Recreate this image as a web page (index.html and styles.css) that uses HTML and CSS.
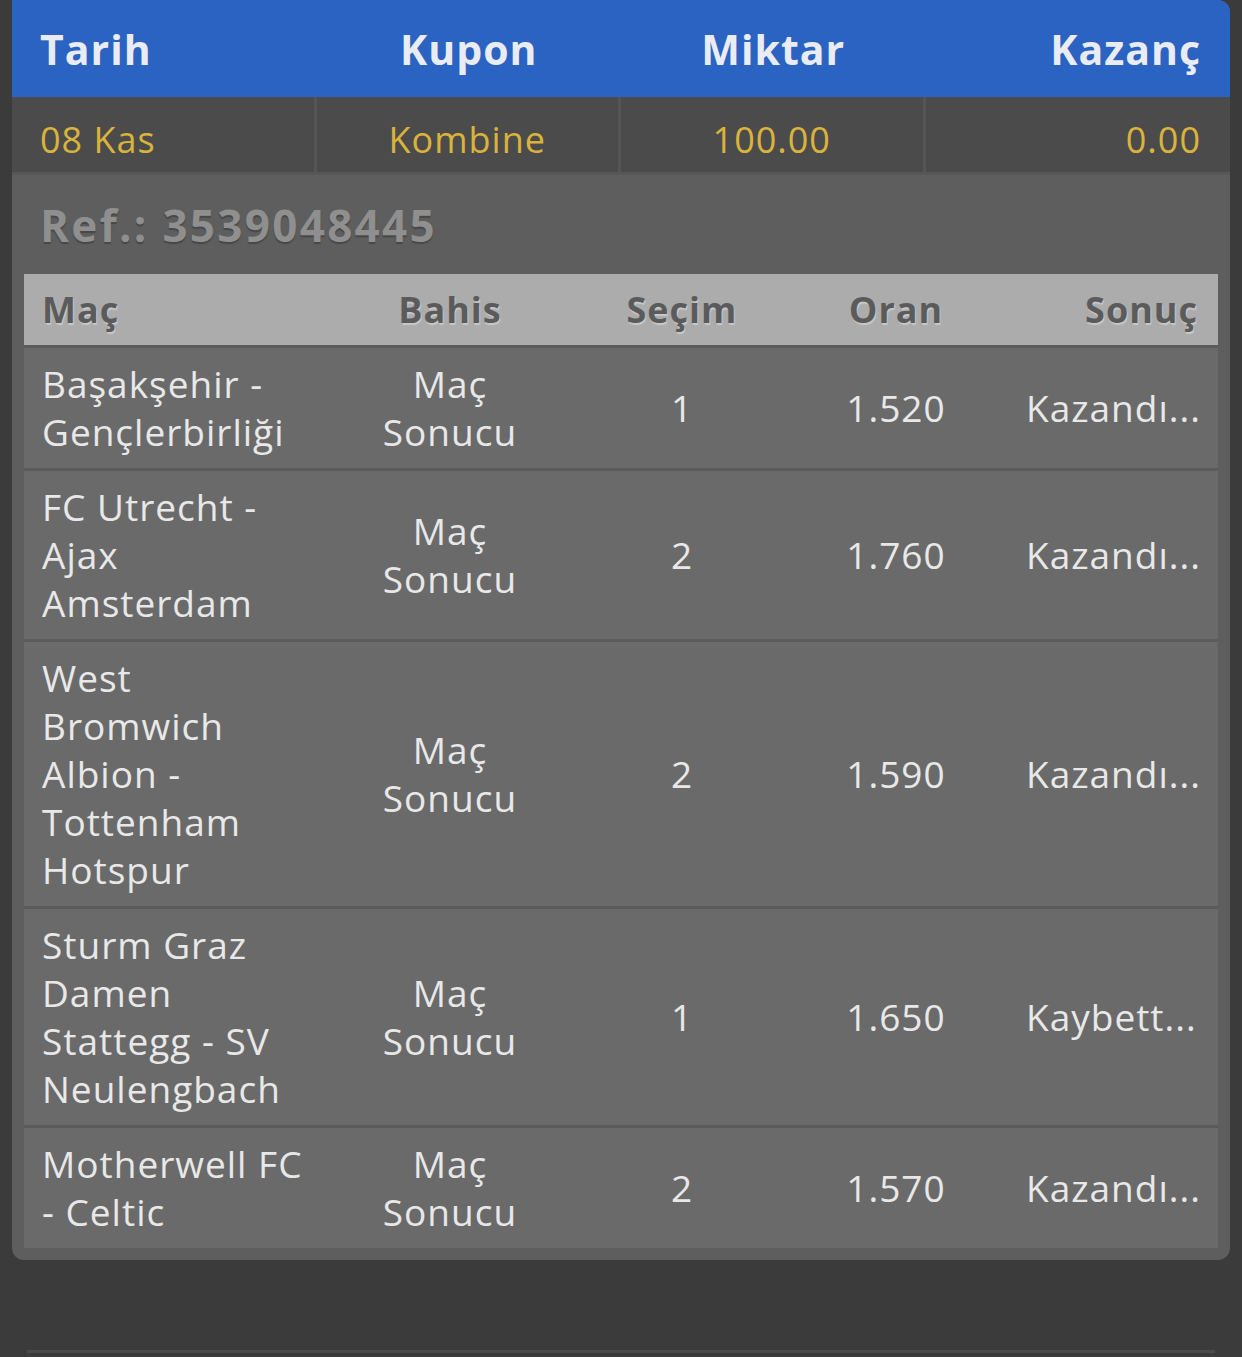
FILE: index.html
```html
<!DOCTYPE html>
<html lang="tr">
<head>
    <meta charset="UTF-8">
    <meta name="viewport" content="width=device-width, initial-scale=1.0">
    <title>Kupon Detayı</title>
    <link rel="stylesheet" href="styles.css">
</head>
<body>

<div class="coupon">
    <div class="summary-head">
        <div class="cell left">Tarih</div>
        <div class="cell center">Kupon</div>
        <div class="cell center">Miktar</div>
        <div class="cell right">Kazanç</div>
    </div>
    <div class="summary-row">
        <div class="cell left">08 Kas</div>
        <div class="cell center">Kombine</div>
        <div class="cell center">100.00</div>
        <div class="cell right">0.00</div>
    </div>

    <div class="ref">Ref.: 3539048445</div>

    <div class="bets">
        <div class="bets-head">
            <div class="match">Maç</div>
            <div class="center">Bahis</div>
            <div class="center">Seçim</div>
            <div class="center">Oran</div>
            <div class="right">Sonuç</div>
        </div>
        <div class="bet-row">
            <div class="match">Başakşehir - Gençlerbirliği</div>
            <div class="bet center">Maç Sonucu</div>
            <div class="center">1</div>
            <div class="center">1.520</div>
            <div class="result">Kazandı...</div>
        </div>
        <div class="bet-row">
            <div class="match">FC Utrecht - Ajax Amsterdam</div>
            <div class="bet center">Maç Sonucu</div>
            <div class="center">2</div>
            <div class="center">1.760</div>
            <div class="result">Kazandı...</div>
        </div>
        <div class="bet-row">
            <div class="match">West Bromwich Albion - Tottenham Hotspur</div>
            <div class="bet center">Maç Sonucu</div>
            <div class="center">2</div>
            <div class="center">1.590</div>
            <div class="result">Kazandı...</div>
        </div>
        <div class="bet-row">
            <div class="match">Sturm Graz Damen Stattegg - SV Neulengbach</div>
            <div class="bet center">Maç Sonucu</div>
            <div class="center">1</div>
            <div class="center">1.650</div>
            <div class="result">Kaybett...</div>
        </div>
        <div class="bet-row">
            <div class="match">Motherwell FC - Celtic</div>
            <div class="bet center">Maç Sonucu</div>
            <div class="center">2</div>
            <div class="center">1.570</div>
            <div class="result">Kazandı...</div>
        </div>
    </div>
</div>

<div class="next-card"></div>

</body>
</html>
```

FILE: styles.css
```css
body {
    margin: 0;
    background-color: #3b3b3b;
    font-family: "Open Sans", "DejaVu Sans", sans-serif;
    letter-spacing: 1px;
}
.coupon {
    width: 1218px;
    margin-left: 12px;
    padding-bottom: 12px;
    background-color: #5e5e5e;
    border-radius: 0 12px 12px 12px;
    overflow: hidden;
}
.summary-head,
.summary-row {
    display: grid;
    grid-template-columns: repeat(4, 1fr);
}
.summary-head {
    height: 97px;
    background-color: #2b63c2;
    color: #e9ecf2;
    font-size: 41px;
    font-weight: bold;
}
.summary-row {
    height: 75px;
    background-color: #4b4b4b;
    border-bottom: 3px solid #575757;
    color: #dab33c;
    font-size: 36px;
}
.cell {
    display: flex;
    align-items: center;
    padding: 0 28px;
}
.summary-row .cell {
    padding-top: 10px;
    border-right: 3px solid #555;
}
.summary-row .cell:last-child {
    border-right: none;
}
.cell.left { justify-content: flex-start; }
.cell.center { justify-content: center; }
.cell.right {
    justify-content: flex-end;
    padding-right: 29px;
}

.ref {
    height: 99px;
    display: flex;
    align-items: center;
    padding-left: 28px;
    color: #8f8f8f;
    font-size: 44px;
    font-weight: bold;
    letter-spacing: 2.3px;
    text-shadow: 0 2px 1px #474747;
}
.bets {
    margin: 0 12px;
}
.bets-head,
.bet-row {
    display: grid;
    grid-template-columns: 316px 220px 244px 184px 1fr;
    align-items: center;
}
.bets-head {
    height: 71px;
    background-color: #acacac;
    color: #5b5b5b;
    font-size: 36px;
    font-weight: bold;
    text-shadow: 1px 2px 1px #c8c8c8;
}
.bet-row {
    background-color: #6a6a6a;
    border-top: 3px solid #5b5b5b;
    padding: 12px 0;
    color: #e8e8e8;
    font-size: 37px;
    line-height: 48px;
}
.match {
    padding: 0 30px 0 18px;
}
.bet {
    padding: 0 20px;
}
.center {
    text-align: center;
}
.right {
    text-align: right;
    padding-right: 20px;
}
.result {
    padding: 0 18px 0 38px;
    white-space: nowrap;
}
.next-card {
    margin: 90px 27px 0;
    height: 6px;
    border-top: 3px solid #4a4a4a;
}
```
